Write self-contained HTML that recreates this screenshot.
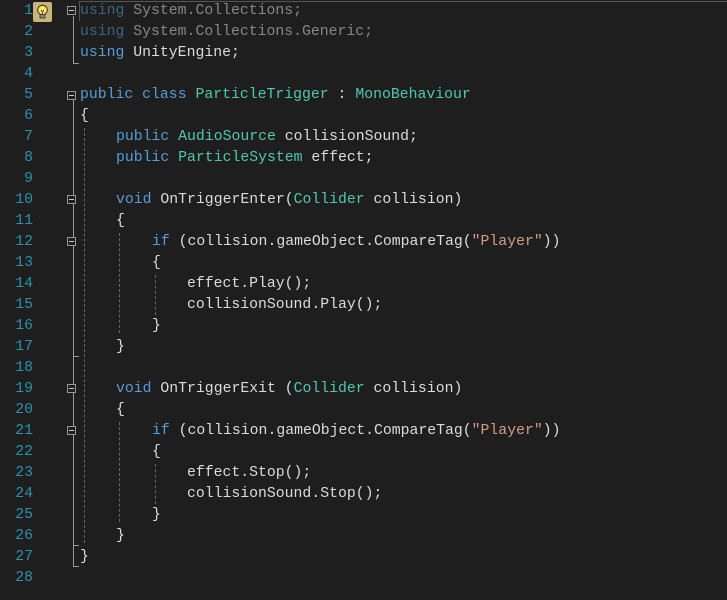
<!DOCTYPE html>
<html><head><style>
body{margin:0;background:#1e1e1e;width:727px;height:600px;overflow:hidden;position:relative;font-family:"Liberation Mono",monospace;font-size:14.8px;color:#dcdcdc}
.ln{position:absolute;left:0;width:33px;text-align:right;color:#2b91af}
.c{position:absolute;white-space:pre;line-height:21px}
.k{color:#569cd6}.t{color:#4ec9b0}.s{color:#d69d85}.d{opacity:.55}
.f{position:absolute;left:67px;width:9px;height:9px;border:1px solid #999;box-sizing:border-box;background:#1e1e1e}
.f:after{content:"";position:absolute;left:1px;top:3px;width:5px;height:1px;background:#ccc}
.v{position:absolute;left:73px;width:1px;background:#999}
.h{position:absolute;left:73px;width:6px;height:1px;background:#999}
.g{position:absolute;width:0;border-left:1px dashed #666}
</style></head><body>
<div style="position:absolute;left:79px;top:1px;width:648px;height:20px;border-top:1px solid #555;border-left:1px solid #555;box-sizing:border-box"></div>
<div style="position:absolute;left:33px;top:2px;width:19px;height:20px;background:#c9b47a;border-radius:2px"></div>
<svg style="position:absolute;left:35px;top:4px" width="15" height="16" viewBox="0 0 15 16"><circle cx="7.5" cy="6" r="4.8" fill="#ffe65a" stroke="#333" stroke-width="1"/><rect x="5" y="10.5" width="5" height="3.5" fill="#888" stroke="#333" stroke-width=".8"/><path d="M6 6l1.5 2 1.5-2M7.5 8v3" stroke="#333" stroke-width=".8" fill="none"/></svg>
<div class="c ln" style="top:1px">1<br>2<br>3<br>4<br>5<br>6<br>7<br>8<br>9<br>10<br>11<br>12<br>13<br>14<br>15<br>16<br>17<br>18<br>19<br>20<br>21<br>22<br>23<br>24<br>25<br>26<br>27<br>28</div>
<div class="c" style="left:80px;top:1px"><span class="k d">using</span><span class="d"> System.Collections;</span>
<span class="k d">using</span><span class="d"> System.Collections.Generic;</span>
<span class="k">using</span> UnityEngine;

<span class="k">public</span> <span class="k">class</span> <span class="t">ParticleTrigger</span> : <span class="t">MonoBehaviour</span>
{</div>
<div class="c" style="left:116px;top:127px"><span class="k">public</span> <span class="t">AudioSource</span> collisionSound;
<span class="k">public</span> <span class="t">ParticleSystem</span> effect;

<span class="k">void</span> OnTriggerEnter(<span class="t">Collider</span> collision)
{</div>
<div class="c" style="left:152px;top:232px"><span class="k">if</span> (collision.gameObject.CompareTag(<span class="s">"Player"</span>))
{</div>
<div class="c" style="left:187px;top:274px">effect.Play();
collisionSound.Play();</div>
<div class="c" style="left:152px;top:316px">}</div>
<div class="c" style="left:116px;top:337px">}

<span class="k">void</span> OnTriggerExit (<span class="t">Collider</span> collision)
{</div>
<div class="c" style="left:152px;top:421px"><span class="k">if</span> (collision.gameObject.CompareTag(<span class="s">"Player"</span>))
{</div>
<div class="c" style="left:187px;top:463px">effect.Stop();
collisionSound.Stop();</div>
<div class="c" style="left:152px;top:505px">}</div>
<div class="c" style="left:116px;top:526px">}</div>
<div class="c" style="left:80px;top:547px">}</div>
<div class="v" style="top:16px;height:47px"></div><div class="h" style="top:63px"></div>
<div class="v" style="top:100px;height:466px"></div><div class="h" style="top:566px"></div>
<div class="h" style="top:356px"></div><div class="h" style="top:545px"></div>
<div class="f" style="top:6px"></div>
<div class="f" style="top:91px"></div>
<div class="f" style="top:195px"></div>
<div class="f" style="top:237px"></div>
<div class="f" style="top:384px"></div>
<div class="f" style="top:426px"></div>
<div class="g" style="left:84px;top:128px;height:415px"></div>
<div class="g" style="left:119px;top:233px;height:100px"></div>
<div class="g" style="left:119px;top:422px;height:100px"></div>
<div class="g" style="left:155px;top:275px;height:40px"></div>
<div class="g" style="left:155px;top:464px;height:40px"></div>
</body></html>
